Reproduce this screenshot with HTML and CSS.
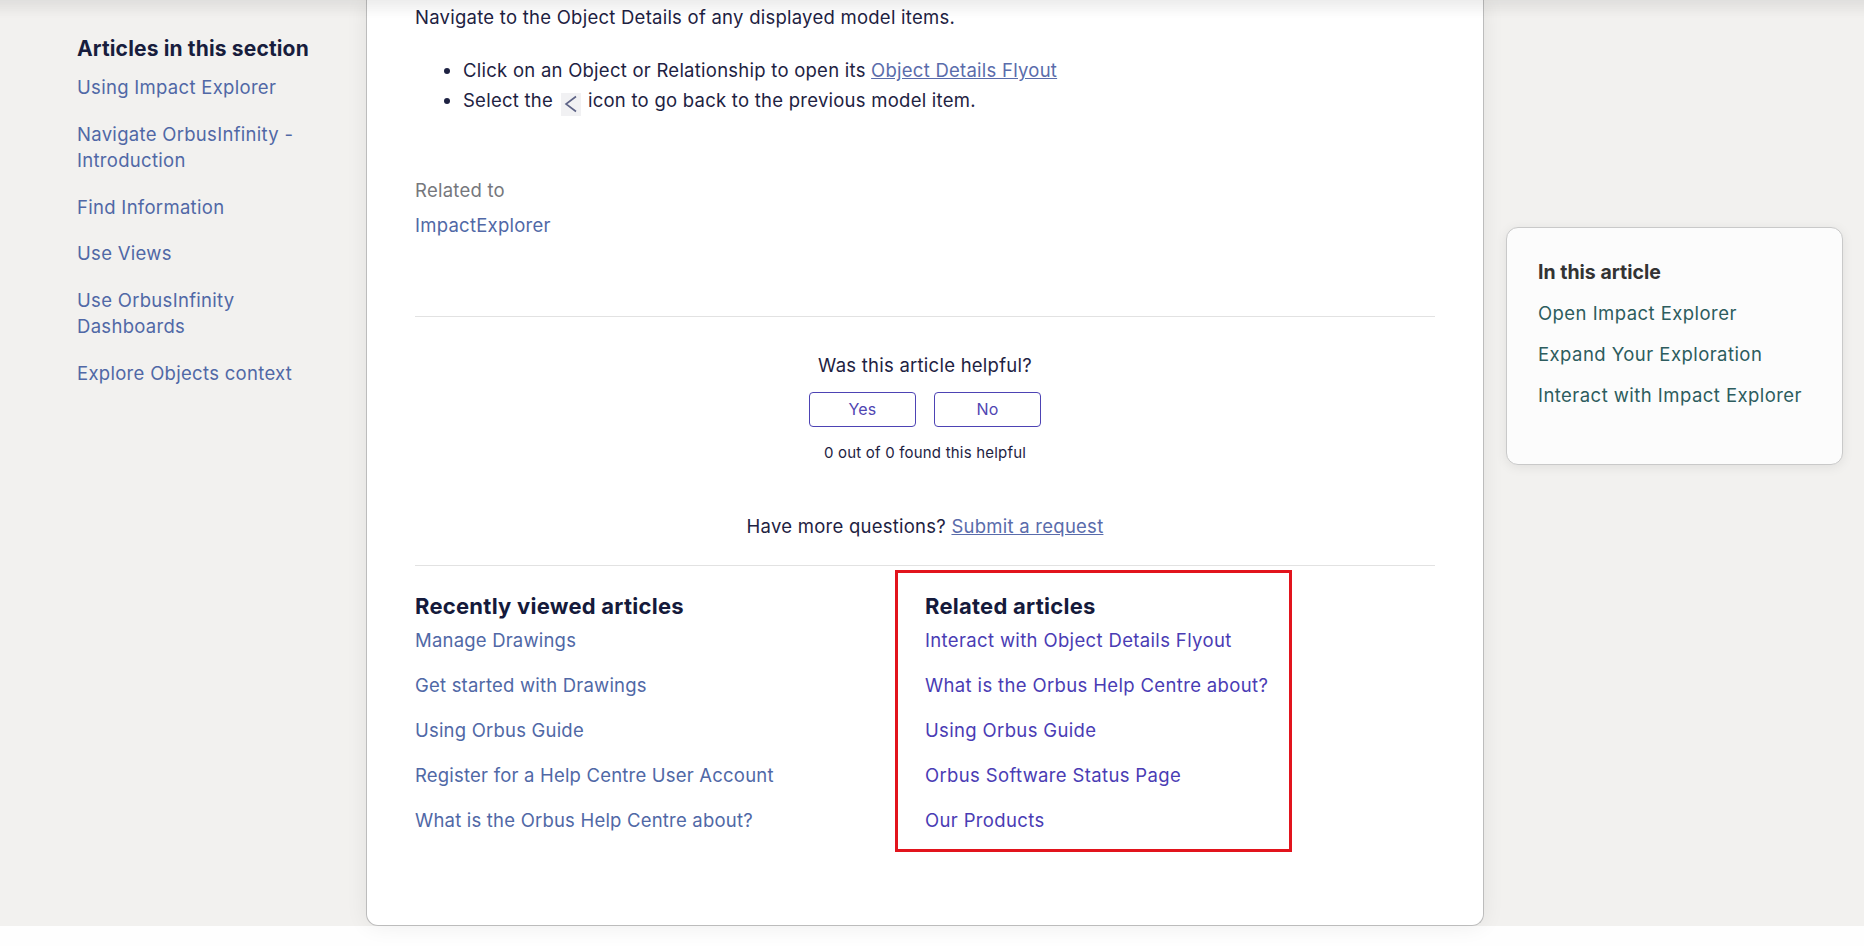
FILE: index.html
```html
<!DOCTYPE html>
<html lang="en">
<head>
    <meta charset="UTF-8">
    <meta name="viewport" content="width=device-width, initial-scale=1.0">
    <title>Using Impact Explorer - Orbus Help Centre</title>
    <link rel="stylesheet" href="styles.css">
</head>
<body>
    <div class="top-shade"></div>

    <div class="page">
        <aside class="section-nav">
            <h3>Articles in this section</h3>
            <ul>
                <li><a href="#">Using Impact Explorer</a></li>
                <li><a href="#">Navigate OrbusInfinity - Introduction</a></li>
                <li><a href="#">Find Information</a></li>
                <li><a href="#">Use Views</a></li>
                <li><a href="#">Use OrbusInfinity Dashboards</a></li>
                <li><a href="#">Explore Objects context</a></li>
            </ul>
        </aside>

        <main class="article">
            <p class="intro">Navigate to the Object Details of any displayed model items.</p>
            <ul class="steps">
                <li>Click on an Object or Relationship to open its <a href="#">Object Details Flyout</a></li>
                <li>Select the <span class="back-icon"><svg width="14" height="18" viewBox="0 0 14 18"><polyline points="12,1.5 2,9 12,16.5" fill="none" stroke="#5d6386" stroke-width="1.6"/></svg></span> icon to go back to the previous model item.</li>
            </ul>

            <div class="related-to">
                <span class="label">Related to</span>
                <a href="#">ImpactExplorer</a>
            </div>

            <div class="votes">
                <p class="votes-question">Was this article helpful?</p>
                <div class="votes-buttons">
                    <button type="button">Yes</button>
                    <button type="button">No</button>
                </div>
                <p class="votes-count">0 out of 0 found this helpful</p>
                <p class="more-questions">Have more questions? <a href="#">Submit a request</a></p>
            </div>

            <div class="article-lists">
                <section class="recent">
                    <h3>Recently viewed articles</h3>
                    <ul>
                        <li><a href="#">Manage Drawings</a></li>
                        <li><a href="#">Get started with Drawings</a></li>
                        <li><a href="#">Using Orbus Guide</a></li>
                        <li><a href="#">Register for a Help Centre User Account</a></li>
                        <li><a href="#">What is the Orbus Help Centre about?</a></li>
                    </ul>
                </section>
                <section class="related">
                    <div class="highlight"></div>
                    <h3>Related articles</h3>
                    <ul>
                        <li><a href="#">Interact with Object Details Flyout</a></li>
                        <li><a href="#">What is the Orbus Help Centre about?</a></li>
                        <li><a href="#">Using Orbus Guide</a></li>
                        <li><a href="#">Orbus Software Status Page</a></li>
                        <li><a href="#">Our Products</a></li>
                    </ul>
                </section>
            </div>
        </main>

        <aside class="toc">
            <div class="toc-card">
                <h4>In this article</h4>
                <ul>
                    <li><a href="#">Open Impact Explorer</a></li>
                    <li><a href="#">Expand Your Exploration</a></li>
                    <li><a href="#">Interact with Impact Explorer</a></li>
                </ul>
            </div>
        </aside>
    </div>

    <footer class="footer"></footer>
</body>
</html>
```

FILE: styles.css
```css
body {
    font-family: Inter, "DejaVu Sans", sans-serif;
    margin: 0;
    padding: 0;
    min-height: 100vh;
    display: flex;
    flex-direction: column;
    background-color: #fefefe;
    color: #1e2242;
}
a {
    text-decoration: none;
}
ul {
    list-style: none;
    margin: 0;
    padding: 0;
}
h3, h4, p {
    margin: 0;
}
.top-shade {
    position: fixed;
    top: 0;
    left: 0;
    right: 0;
    height: 18px;
    background: linear-gradient(rgba(0, 0, 0, 0.07), rgba(0, 0, 0, 0));
    pointer-events: none;
    z-index: 5;
}
.page {
    display: flex;
    align-items: flex-start;
    background-color: #f2f1ef;
}
.footer {
    flex: 1;
    background-color: #fefefe;
}

/* left column */
.section-nav {
    width: 289px;
    flex-shrink: 0;
    padding-left: 77px;
}
.section-nav h3 {
    margin-top: 36px;
    font-size: 21px;
    line-height: 26px;
    font-weight: 700;
    letter-spacing: 0.15px;
    color: #181d3d;
}
.section-nav ul {
    width: 230px;
}
.section-nav li {
    margin-top: 20px;
    font-size: 18.5px;
    line-height: 26.5px;
    letter-spacing: 0.3px;
}
.section-nav li:first-child {
    margin-top: 12px;
}
.section-nav a {
    color: #5068a6;
}

/* article card */
.article {
    position: relative;
    z-index: 1;
    width: 1020px;
    flex-shrink: 0;
    padding: 4px 48px 92px;
    background-color: white;
    border: 1px solid #bcbcbc;
    border-top: none;
    border-radius: 0 0 12px 12px;
    box-shadow: 0 0 22px rgba(0, 0, 0, 0.07);
    font-size: 18.5px;
    letter-spacing: 0.25px;
}
.intro {
    line-height: 27px;
}
.steps {
    margin-top: 24px;
    padding-left: 48px;
    list-style: disc;
}
.steps li {
    line-height: 30px;
}
.steps a,
.more-questions a {
    color: #5a6cab;
    text-decoration: underline;
}
.back-icon {
    display: inline-flex;
    align-items: center;
    justify-content: center;
    width: 20px;
    height: 23px;
    margin: 0 1px 0 3px;
    vertical-align: -6px;
    background-color: #f1f1f3;
}
.related-to {
    margin-top: 61px;
    line-height: 26px;
}
.related-to .label {
    display: block;
    color: #76777c;
}
.related-to a {
    display: block;
    margin-top: 9px;
    color: #5068a6;
}
.votes {
    margin-top: 78px;
    padding: 35px 0 26px;
    border-top: 1px solid #e2e2e2;
    border-bottom: 1px solid #e2e2e2;
    text-align: center;
}
.votes-question {
    line-height: 26px;
}
.votes-buttons {
    display: flex;
    justify-content: center;
    gap: 18px;
    margin-top: 14px;
}
.votes-buttons button {
    width: 107px;
    height: 35px;
    border: 1px solid #4d43b4;
    border-radius: 4px;
    background-color: white;
    color: #4f45b2;
    font-family: inherit;
    font-size: 16px;
    letter-spacing: 0.2px;
    cursor: pointer;
}
.votes-count {
    margin-top: 16px;
    font-size: 15px;
    line-height: 20px;
    letter-spacing: 0.2px;
}
.more-questions {
    margin-top: 50px;
    line-height: 26px;
}
.article-lists {
    display: grid;
    grid-template-columns: 1fr 1fr;
    padding-top: 26px;
}
.article-lists h3 {
    font-size: 22px;
    line-height: 28px;
    font-weight: 700;
    letter-spacing: 0.25px;
    color: #151a3b;
}
.article-lists li {
    margin-top: 19px;
    line-height: 26px;
    letter-spacing: 0.35px;
}
.article-lists li:first-child {
    margin-top: 7px;
}
.recent li {
    letter-spacing: 0.2px;
}
.recent a {
    color: #5068a6;
}
.related {
    position: relative;
}
.related a {
    color: #4a3cb4;
}
.highlight {
    position: absolute;
    left: -30px;
    top: -22px;
    width: 397px;
    height: 282px;
    box-sizing: border-box;
    border: 3px solid #e2141d;
    pointer-events: none;
}

/* right column */
.toc {
    margin-left: 22px;
    padding-top: 227px;
}
.toc-card {
    width: 273px;
    padding: 31px 31px 56px;
    background-color: #fcfcfc;
    border: 1px solid #c9c9c9;
    border-radius: 12px;
    box-shadow: 0 2px 12px rgba(0, 0, 0, 0.08);
}
.toc h4 {
    font-size: 19.5px;
    line-height: 26px;
    font-weight: 700;
    color: #333;
}
.toc li {
    margin-top: 15px;
    font-size: 18.5px;
    line-height: 26px;
    letter-spacing: 0.45px;
}
.toc a {
    color: #2d5c5e;
}
```
